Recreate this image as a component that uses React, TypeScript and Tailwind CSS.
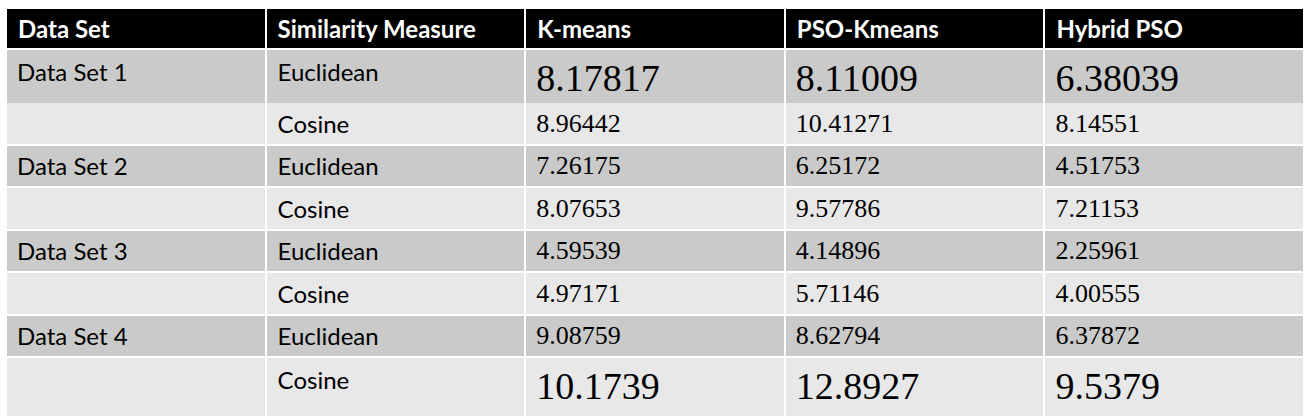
const headers = ["Data Set", "Similarity Measure", "K-means", "PSO-Kmeans", "Hybrid PSO"];

type Row = { set: string; measure: string; values: string[]; big?: boolean; dark: boolean; h: string };

const rows: Row[] = [
  { set: "Data Set 1", measure: "Euclidean", values: ["8.17817", "8.11009", "6.38039"], big: true, dark: true, h: "h-[51px]" },
  { set: "", measure: "Cosine", values: ["8.96442", "10.41271", "8.14551"], dark: false, h: "h-[40.5px]" },
  { set: "Data Set 2", measure: "Euclidean", values: ["7.26175", "6.25172", "4.51753"], dark: true, h: "h-[40.5px]" },
  { set: "", measure: "Cosine", values: ["8.07653", "9.57786", "7.21153"], dark: false, h: "h-[40.5px]" },
  { set: "Data Set 3", measure: "Euclidean", values: ["4.59539", "4.14896", "2.25961"], dark: true, h: "h-[40.5px]" },
  { set: "", measure: "Cosine", values: ["4.97171", "5.71146", "4.00555"], dark: false, h: "h-[40.5px]" },
  { set: "Data Set 4", measure: "Euclidean", values: ["9.08759", "8.62794", "6.37872"], dark: true, h: "h-[40.5px]" },
  { set: "", measure: "Cosine", values: ["10.1739", "12.8927", "9.5379"], big: true, dark: false, h: "h-[50px]" },
];

export default function App() {
  return (
    <div className="w-[1312px] h-[416px] bg-white pt-[9px] pl-[7px]">
      <div className="w-[1296px] flex flex-col gap-[2px]">
        <div className="grid grid-cols-5 gap-[2px] h-[39px]">
          {headers.map((h) => (
            <div
              key={h}
              className="bg-black text-white font-bold text-[24px] leading-none pl-[11px] flex items-center font-['Lato',sans-serif]"
            >
              {h}
            </div>
          ))}
        </div>
        {rows.map((r, i) => {
          const bg = r.dark ? "bg-[#cacaca]" : "bg-[#e8e8e8]";
          // tall rows keep the labels near the top, numbers sit a bit above centre
          const label = r.big ? "items-start pt-[7px]" : "items-center";
          const num = r.big ? "text-[38px] pb-[4px]" : "text-[26px]";
          return (
            <div key={i} className={`grid grid-cols-5 gap-[2px] ${r.h}`}>
              <div className={`${bg} ${label} pl-[10px] flex text-[24px] leading-[29px] text-black font-['Lato',sans-serif]`}>
                {r.set}
              </div>
              <div className={`${bg} ${label} pl-[11px] flex text-[24px] leading-[29px] text-black font-['Lato',sans-serif]`}>
                {r.measure}
              </div>
              {r.values.map((v, j) => (
                <div
                  key={j}
                  className={`${bg} ${num} pl-[10px] flex items-center text-black font-['Liberation_Serif',serif]`}
                >
                  {v}
                </div>
              ))}
            </div>
          );
        })}
      </div>
    </div>
  );
}
